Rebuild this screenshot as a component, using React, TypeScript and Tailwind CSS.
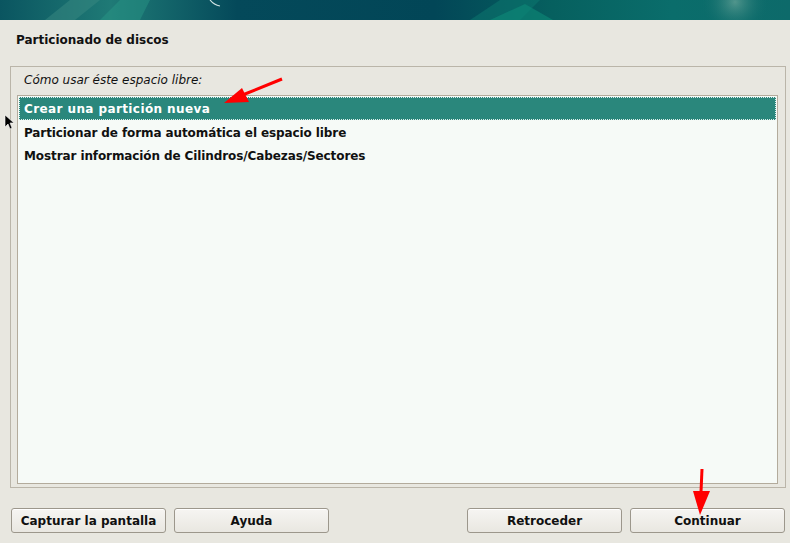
const FONT = { fontFamily: '"DejaVu Sans", "Liberation Sans", sans-serif' };

const options = [
  'Crear una partición nueva',
  'Particionar de forma automática el espacio libre',
  'Mostrar información de Cilindros/Cabezas/Sectores',
];

function Banner() {
  return (
    <div className="h-[20px] w-full overflow-hidden bg-[linear-gradient(90deg,#0a5560_0%,#1f7a76_14%,#04495a_30%,#024657_55%,#06605f_70%,#0a6d6b_85%,#0d6a6a_100%)]">
      <svg width="790" height="20" viewBox="0 0 790 20">
        <defs>
          <radialGradient id="glow" cx="0.5" cy="0.5" r="0.5">
            <stop offset="0" stopColor="#8ab8a8" stopOpacity="0.55" />
            <stop offset="1" stopColor="#0d6a6a" stopOpacity="0" />
          </radialGradient>
        </defs>
        <polygon points="45,20 70,0 100,0 75,20" fill="#3a8a82" opacity="0.5" />
        <polygon points="100,20 120,0 150,0 140,20" fill="#2a9a88" opacity="0.45" />
        <polygon points="470,20 500,0 540,0 520,20" fill="#0c7a70" opacity="0.5" />
        <polygon points="490,20 525,4 553,20" fill="#0e8a78" opacity="0.6" />
        <circle cx="735" cy="2" r="34" fill="url(#glow)" />
        <path d="M210,0 Q214,5 220,6" stroke="#cfe3e3" strokeWidth="1.2" fill="none" />
      </svg>
    </div>
  );
}

function Button({ label }: { label: string }) {
  return (
    <button className="h-[25px] w-[155px] rounded-[3px] border border-[#9c978c] bg-[linear-gradient(#f6f5f2,#e9e7e1)] text-[12px] font-bold text-[#101010] shadow-[inset_0_1px_0_#ffffff]">
      {label}
    </button>
  );
}

export default function App() {
  return (
    <div className="relative flex h-[543px] w-[790px] flex-col overflow-hidden bg-[#e8e7e0]" style={FONT}>
      <Banner />

      <div className="px-[16px] pt-[11px] text-[12px] font-bold text-[#111]">Particionado de discos</div>

      <div className="ml-[10px] mr-[4px] mt-[17px] flex h-[422px] flex-col border border-[#bab5a9] pl-[6px] pr-[7px] pb-[3px]">
        <div className="pl-[7px] pt-[4px] text-[12px] italic text-[#111]">Cómo usar éste espacio libre:</div>
        <div className="mt-[6px] flex-1 border border-[#b3ab9c] bg-[#f6faf7] px-px pt-[1px]">
          {options.map((o, i) => (
            <div
              key={o}
              className={
                i === 0
                  ? 'flex h-[23px] items-center border border-dotted border-[#dcefeb] bg-[#2a877c] pl-[4px] pt-[1px] text-[12px] font-bold tracking-[0.4px] text-white'
                  : 'flex h-[23px] items-center pl-[5px] pt-[2px] text-[12px] font-bold tracking-[-0.1px] text-[#111]'
              }
            >
              {o}
            </div>
          ))}
        </div>
      </div>

      <div className="mt-[20px] flex pl-[11px] pr-[5px]">
        <div className="flex gap-[8px]">
          <Button label="Capturar la pantalla" />
          <Button label="Ayuda" />
        </div>
        <div className="ml-auto flex gap-[8px]">
          <Button label="Retroceder" />
          <Button label="Continuar" />
        </div>
      </div>

      {/* annotation arrows and pointer */}
      <svg className="pointer-events-none absolute left-0 top-0" width="790" height="543" viewBox="0 0 790 543">
        <line x1="282" y1="79" x2="240" y2="96" stroke="#ff0000" strokeWidth="3" />
        <polygon points="224,103 242,88 249,102" fill="#ff0000" />
        <line x1="702" y1="469" x2="701" y2="492" stroke="#ff0000" strokeWidth="3" />
        <polygon points="693,491 710,491 700,515" fill="#ff0000" />
        <path d="M5,115 L5,127 L8,124 L10,129 L12,128 L10,123 L14,123 Z" fill="#000" stroke="#fff" strokeWidth="0.6" />
      </svg>
    </div>
  );
}
